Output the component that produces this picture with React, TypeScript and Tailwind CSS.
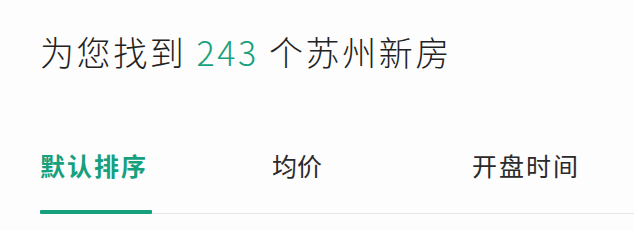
import React from "react";

const font = { fontFamily: '"Noto Sans CJK SC", "Noto Sans", sans-serif' };

function App() {
    return (
        <div
            className="w-[634px] h-[230px] bg-[#fdfdfd] pt-[32px] pl-[40px] overflow-hidden"
            style={font}
        >
            <h1 className="text-[34px] leading-[40px] tracking-[2.6px] text-[#222222] font-light whitespace-nowrap">
                为您找到 <span className="text-[#17a07d]">243</span> 个苏州新房
            </h1>

            <div className="mt-[77px] flex items-start border-b border-[#e6e6e6]">
                <div className="flex flex-col w-[112px]">
                    <span className="text-[25px] leading-[32px] tracking-[2px] font-bold text-[#17a07d] whitespace-nowrap">
                        默认排序
                    </span>
                    <div className="mt-[29px] h-[4px] -mb-px rounded-[1px] bg-[#17a07d]" />
                </div>
                <span className="ml-[120px] text-[25px] leading-[32px] text-[#2a2a2a] whitespace-nowrap">
                    均价
                </span>
                <span className="ml-[150px] text-[25px] leading-[32px] tracking-[2px] text-[#2a2a2a] whitespace-nowrap">
                    开盘时间
                </span>
            </div>
        </div>
    );
}

export default App;
